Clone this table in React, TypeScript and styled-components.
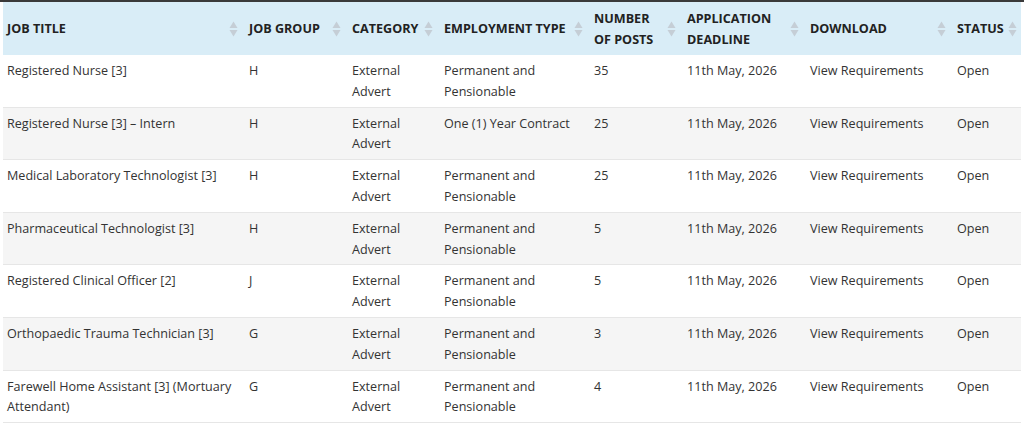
import React from "react";
import styled, { createGlobalStyle } from "styled-components";

const Global = createGlobalStyle`
  html, body { margin: 0; padding: 0; background: #fff; }
  body { font-family: "Open Sans", "Liberation Sans", sans-serif; }
`;

const Page = styled.div`
  border-top: 2px solid #3a3a3a;
  padding: 0 3px;
`;

const Table = styled.table`
  width: 1018px;
  border-collapse: collapse;
  table-layout: fixed;
  font-size: 12.6px;
  line-height: 20.8px;
  color: #333;
`;

const HeadCell = styled.th`
  background: #d9edf7;
  padding: 5.5px 4px;
  text-align: left;
  vertical-align: middle;
  font-weight: 700;
  line-height: 21px;
  text-transform: uppercase;
  color: #222;
`;

const HeadInner = styled.div`
  display: flex;
  align-items: center;
  justify-content: space-between;
  gap: 4px;
`;

const SortIcon = styled.svg`
  flex: none;
  width: 9px;
  height: 16px;
  margin-right: 3px;
`;

const Row = styled.tr<{ $striped: boolean }>`
  background: ${(p) => (p.$striped ? "#f5f5f5" : "#fff")};
  border-bottom: 1px solid #e6e6e6;
`;

const Cell = styled.td`
  padding: 6px 4px 4px;
  vertical-align: top;
  color: #333;
`;

const Sort = () => (
  <SortIcon viewBox="0 0 9 16">
    <path d="M4.5 0.5 L8.5 7 L0.5 7 Z" fill="#c5ced6" />
    <path d="M0.5 9 L8.5 9 L4.5 15.5 Z" fill="#c5ced6" />
  </SortIcon>
);

const cols = [242, 103, 92, 150, 93, 123, 147, 68];
const heads = [
  "Job Title",
  "Job Group",
  "Category",
  "Employment Type",
  "Number of Posts",
  "Application Deadline",
  "Download",
  "Status",
];

const rows = [
  ["Registered Nurse [3]", "H", "External Advert", "Permanent and Pensionable", "35"],
  ["Registered Nurse [3] – Intern", "H", "External Advert", "One (1) Year Contract", "25"],
  ["Medical Laboratory Technologist [3]", "H", "External Advert", "Permanent and Pensionable", "25"],
  ["Pharmaceutical Technologist [3]", "H", "External Advert", "Permanent and Pensionable", "5"],
  ["Registered Clinical Officer [2]", "J", "External Advert", "Permanent and Pensionable", "5"],
  ["Orthopaedic Trauma Technician [3]", "G", "External Advert", "Permanent and Pensionable", "3"],
  ["Farewell Home Assistant [3] (Mortuary Attendant)", "G", "External Advert", "Permanent and Pensionable", "4"],
];

export default function App() {
  return (
    <Page>
      <Global />
      <Table>
        <colgroup>
          {cols.map((w, i) => (
            <col key={i} style={{ width: w }} />
          ))}
        </colgroup>
        <thead>
          <tr>
            {heads.map((h) => (
              <HeadCell key={h}>
                <HeadInner>
                  <span>{h}</span>
                  <Sort />
                </HeadInner>
              </HeadCell>
            ))}
          </tr>
        </thead>
        <tbody>
          {rows.map((r, i) => (
            <Row key={i} $striped={i % 2 === 1}>
              {r.map((c, j) => (
                <Cell key={j}>{c}</Cell>
              ))}
              <Cell>11th May, 2026</Cell>
              <Cell>View Requirements</Cell>
              <Cell>Open</Cell>
            </Row>
          ))}
        </tbody>
      </Table>
    </Page>
  );
}
